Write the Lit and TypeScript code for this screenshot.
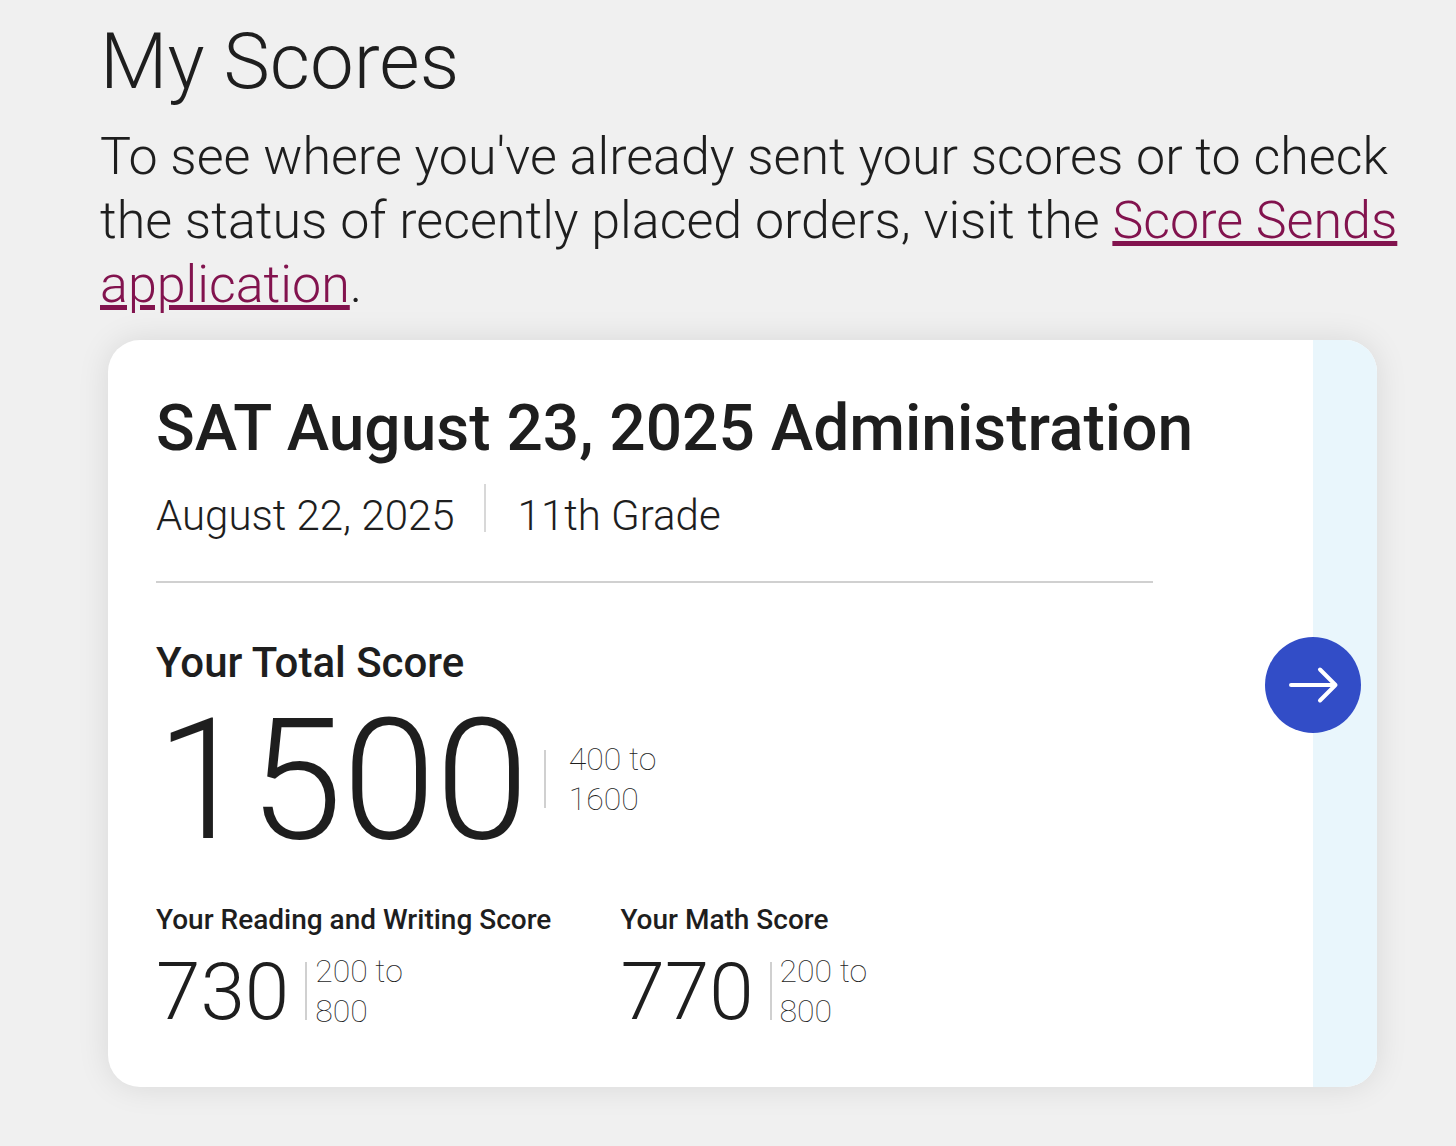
import { LitElement, html, css } from "lit";
import { customElement, property } from "lit/decorators.js";

@customElement("score-value")
class ScoreValue extends LitElement {
  @property() label = "";
  @property() score = "";
  @property() low = "";
  @property() high = "";
  @property({ reflect: true }) size = "small";

  static styles = css`
    :host { display: block; }
    h3 { margin: 0; font-weight: 500; font-size: 28px; line-height: 32px; }
    .row { display: flex; align-items: center; margin-top: 15px; }
    .number { font-weight: 300; font-size: 80px; line-height: 80px; }
    .range { display: flex; align-items: center; gap: 8px; margin-left: 16px; padding-bottom: 2px; }
    .rule { width: 2px; height: 58px; background: #d0d0d0; }
    .bounds { font-weight: 100; font-size: 32px; line-height: 40px; }
    .bounds span { display: block; }
    :host([size="large"]) h3 { font-size: 42px; line-height: 56px; }
    :host([size="large"]) .row { margin-top: 6px; }
    :host([size="large"]) .number { font-size: 168px; line-height: 168px; }
    :host([size="large"]) .range { gap: 23px; margin-left: 15px; padding-bottom: 5px; }
  `;

  render() {
    return html`
      <h3>${this.label}</h3>
      <div class="row">
        <div class="number">${this.score}</div>
        <div class="range">
          <div class="rule"></div>
          <div class="bounds"><span>${this.low} to</span><span>${this.high}</span></div>
        </div>
      </div>
    `;
  }
}

@customElement("app-root")
class AppRoot extends LitElement {
  static styles = css`
    :host {
      display: block;
      box-sizing: border-box;
      min-height: 100vh;
      padding: 13px 56px 59px 100px;
      background: #f0f0f0;
      color: #1e1e1e;
      font-family: Roboto, sans-serif;
    }
    * { box-sizing: border-box; }
    h1, h2, p { margin: 0; }
    h1 { font-weight: 300; font-size: 78px; line-height: 98px; }
    .intro { margin: 14px 0 23px; font-weight: 300; font-size: 52px; line-height: 64px; }
    .intro a { color: #82134e; }
    .card {
      display: flex;
      margin: 0 23px 0 8px;
      border-radius: 32px;
      background: #fff;
      box-shadow: 0 0 32px rgba(0, 0, 0, 0.1);
    }
    .body { flex: 1; padding: 48px 112px 54px 48px; }
    .strip { position: relative; width: 64px; background: #e9f6fc; border-radius: 0 32px 32px 0; }
    h2 { font-weight: 500; font-size: 64px; line-height: 82px; }
    .meta { display: flex; margin-top: 14px; font-weight: 300; font-size: 42px; line-height: 48px; }
    .meta p { padding-top: 8px; }
    .divider { width: 2px; height: 48px; margin: 0 32px 0 29px; background: #d8d8d8; }
    hr { height: 2px; margin: 41px 48px 52px 0; border: 0; background: #d0d0d0; }
    .sections { display: flex; gap: 69px; margin-top: 39px; }
    .open {
      position: absolute;
      top: 297px;
      left: -48px;
      width: 96px;
      height: 96px;
      padding: 0;
      border: 0;
      border-radius: 50%;
      background: #324dc7;
      cursor: pointer;
    }
    .open svg { display: block; }
  `;

  render() {
    return html`
      <h1>My Scores</h1>
      <p class="intro">
        To see where you've already sent your scores or to check the status of recently placed orders, visit the
        <a href="#">Score Sends application</a>.
      </p>
      <section class="card">
        <div class="body">
          <h2>SAT August 23, 2025 Administration</h2>
          <div class="meta">
            <p>August 22, 2025</p>
            <div class="divider"></div>
            <p>11th Grade</p>
          </div>
          <hr />
          <score-value size="large" label="Your Total Score" score="1500" low="400" high="1600"></score-value>
          <div class="sections">
            <score-value label="Your Reading and Writing Score" score="730" low="200" high="800"></score-value>
            <score-value label="Your Math Score" score="770" low="200" high="800"></score-value>
          </div>
        </div>
        <div class="strip">
          <button class="open" type="button" aria-label="View score details">
            <svg width="96" height="96" viewBox="0 0 96 96" fill="none" stroke="#fff" stroke-width="4" stroke-linecap="round" stroke-linejoin="round" aria-hidden="true">
              <path d="M26 48H70.5M55 32.5L70.5 48L55 63.5" />
            </svg>
          </button>
        </div>
      </section>
    `;
  }
}
